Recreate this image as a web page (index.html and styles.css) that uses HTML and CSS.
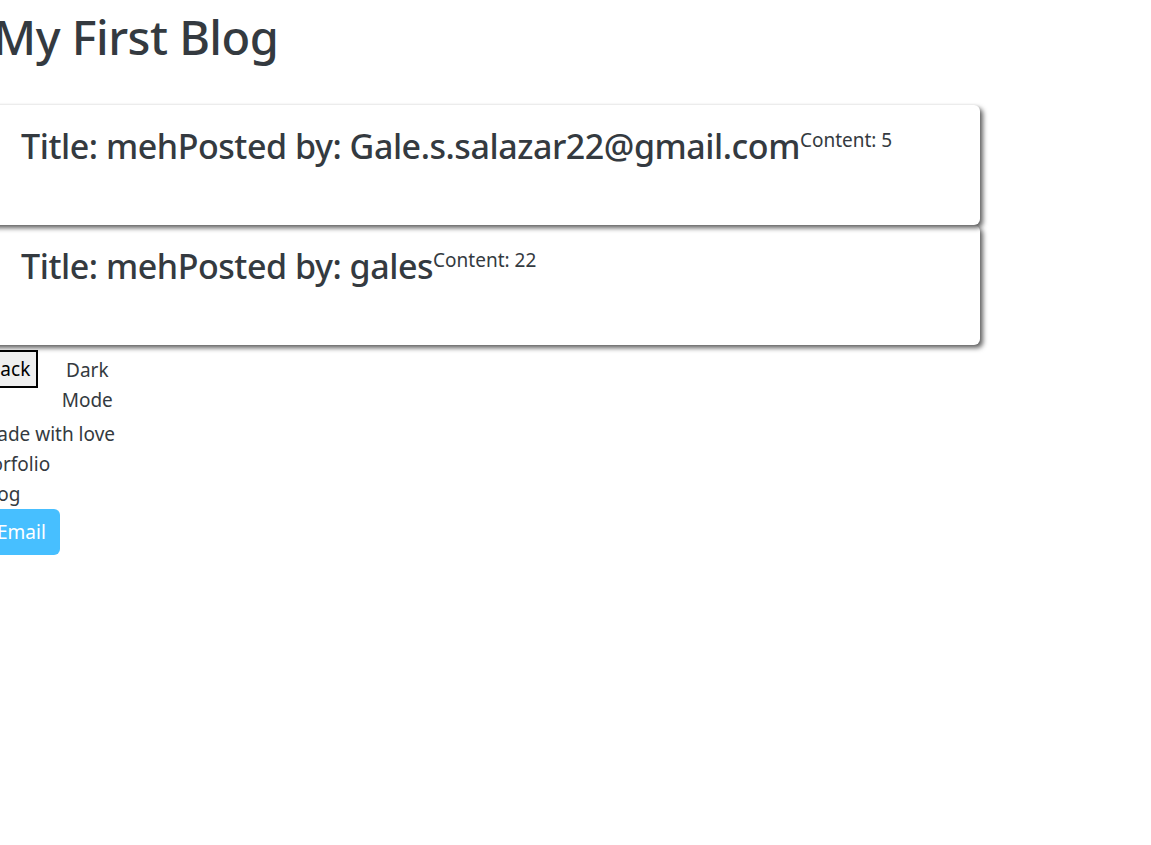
FILE: index.html
```html
<!DOCTYPE html>
<html>
<head>
<meta charset="utf-8">
<link rel="stylesheet" href="styles.css">
</head>
<body>
<div class="page">
  <h1 class="blog-title">My First Blog</h1>
  <div class="posts">
    <div class="post">
      <h2 class="post-head">Title: mehPosted by: Gale.s.salazar22@gmail.com</h2>
      <p class="post-content">Content: 5</p>
    </div>
    <div class="post">
      <h2 class="post-head">Title: mehPosted by: gales</h2>
      <p class="post-content">Content: 22</p>
    </div>
  </div>
  <div class="controls">
    <button class="back-btn">Back</button>
    <span class="mode">Dark Mode</span>
  </div>
  <footer class="footer">
    <div class="foot-line">Made with love</div>
    <div class="foot-line">Porfolio</div>
    <div class="foot-line">Blog</div>
    <button class="email-btn">Email</button>
  </footer>
</div>
</body>
</html>
```
FILE: styles.css
```css
html, body {
  margin: 0;
  padding: 0;
  background: #ffffff;
  overflow: hidden;
}
body {
  font-family: "Noto Sans", "Open Sans", sans-serif;
  color: #343a40;
}
.page {
  margin-left: -20px;
  width: 1000px;
}
.blog-title {
  margin: 0 0 0 13px;
  padding-top: 7px;
  font-size: 47px;
  font-weight: 500;
  letter-spacing: -0.5px;
  line-height: 60px;
  height: 98px;
}
.posts {
  display: flex;
  flex-direction: column;
}
.post {
  display: flex;
  align-items: flex-start;
  background: #fff;
  border-radius: 6px;
  box-shadow: 3px 3px 5px rgba(0, 0, 0, 0.62), 0 0 3px rgba(0, 0, 0, 0.08);
  padding: 20px 20px 0 41px;
  height: 100px;
}
.post:first-child {
  position: relative;
  z-index: 1;
}
.post-head {
  margin: 0;
  font-size: 34px;
  font-weight: 500;
  letter-spacing: -0.45px;
  line-height: 42px;
}
.post-content {
  margin: 0;
  padding-top: 4px;
  font-size: 19px;
  line-height: 23px;
}
.controls {
  display: flex;
  align-items: flex-start;
  margin-top: 5px;
}
.back-btn {
  font-family: "Noto Sans", "Open Sans", sans-serif;
  font-size: 19px;
  color: #000;
  background: #efefef;
  border: 2px solid #000;
  padding: 0 6px;
  height: 38px;
  margin: 0;
}
.mode {
  width: 62px;
  margin-left: 18px;
  text-align: center;
  font-size: 19px;
  line-height: 30px;
  padding-top: 5px;
}
.footer {
  display: flex;
  flex-direction: column;
  align-items: flex-start;
  padding-top: 4px;
}
.foot-line {
  font-size: 19px;
  line-height: 30px;
}
.email-btn {
  font-family: "Noto Sans", "Open Sans", sans-serif;
  font-size: 19px;
  color: #fff;
  background: #47bfff;
  border: none;
  border-radius: 6px;
  padding: 0 14px 0 17px;
  height: 46px;
  margin-top: 0;
}
```
